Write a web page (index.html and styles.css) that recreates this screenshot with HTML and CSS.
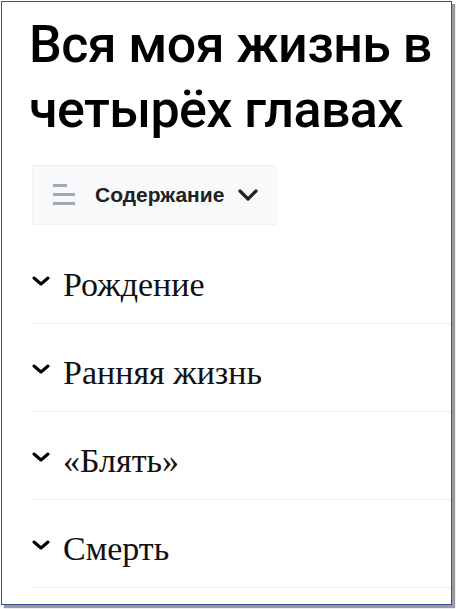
FILE: index.html
```html
<!DOCTYPE html>
<html lang="ru">
<head>
<meta charset="utf-8">
<link rel="stylesheet" href="styles.css">
</head>
<body>
<div class="frame">
  <div class="page">
    <h1 class="title">Вся моя жизнь в четырёх главах</h1>
    <button class="toc">
      <svg class="toc-icon" width="24" height="22" viewBox="0 0 24 22">
        <rect x="0" y="0" width="14" height="3" fill="#a2a9b1"/>
        <rect x="0" y="9" width="22" height="3" fill="#a2a9b1"/>
        <rect x="0" y="18" width="22" height="3" fill="#a2a9b1"/>
      </svg>
      <span class="toc-label">Содержание</span>
      <svg class="toc-chev" width="20" height="12" viewBox="0 0 20 12">
        <path d="M2 2 L10 10 L18 2" fill="none" stroke="#202122" stroke-width="3.2" stroke-linecap="round" stroke-linejoin="round"/>
      </svg>
    </button>
    <ul class="sections">
      <li class="section">
        <svg class="chev" width="18" height="10" viewBox="0 0 18 10"><path d="M2 2 L9 8 L16 2" fill="none" stroke="#000" stroke-width="3" stroke-linecap="round" stroke-linejoin="round"/></svg>
        <span class="section-title">Рождение</span>
      </li>
      <li class="section">
        <svg class="chev" width="18" height="10" viewBox="0 0 18 10"><path d="M2 2 L9 8 L16 2" fill="none" stroke="#000" stroke-width="3" stroke-linecap="round" stroke-linejoin="round"/></svg>
        <span class="section-title">Ранняя жизнь</span>
      </li>
      <li class="section">
        <svg class="chev" width="18" height="10" viewBox="0 0 18 10"><path d="M2 2 L9 8 L16 2" fill="none" stroke="#000" stroke-width="3" stroke-linecap="round" stroke-linejoin="round"/></svg>
        <span class="section-title">«Блять»</span>
      </li>
      <li class="section">
        <svg class="chev" width="18" height="10" viewBox="0 0 18 10"><path d="M2 2 L9 8 L16 2" fill="none" stroke="#000" stroke-width="3" stroke-linecap="round" stroke-linejoin="round"/></svg>
        <span class="section-title">Смерть</span>
      </li>
    </ul>
  </div>
</div>
</body>
</html>
```
FILE: styles.css
```css
html, body {
  margin: 0;
  padding: 0;
  background: #ffffff;
}
body {
  width: 456px;
  height: 609px;
  overflow: hidden;
}
.frame {
  margin: 1px 0 0 1px;
  width: 449px;
  height: 602px;
  border: 1px solid #3f4c9c;
  box-shadow: 3px 3px 1px #9a9a9a;
  overflow: hidden;
  background: #fff;
}
.page {
  padding: 10px 0 0 30px;
}
.title {
  margin: 0 0 0 -3px;
  font-family: Roboto, "Liberation Sans", sans-serif;
  font-weight: 500;
  font-size: 52px;
  line-height: 65px;
  color: #000;
  letter-spacing: -0.6px;
}
.toc {
  margin-top: 23px;
  display: flex;
  align-items: center;
  width: 245px;
  height: 60px;
  padding: 0 0 0 20px;
  background: #f8f9fa;
  border: 1px solid #f1f2f4;
  border-radius: 2px;
  font: inherit;
}
.toc-icon {
  display: block;
  flex: none;
}
.toc-label {
  margin-left: 18px;
  font-family: "Liberation Sans", Arial, sans-serif;
  font-weight: bold;
  font-size: 21px;
  color: #202122;
}
.toc-chev {
  margin-left: 14px;
  display: block;
  flex: none;
}
.sections {
  list-style: none;
  margin: 11px 0 0 0;
  padding: 0;
}
.section {
  display: flex;
  align-items: center;
  padding: 29px 0 18px 0;
  border-bottom: 1px solid #eaecf0;
}
.chev {
  display: block;
  flex: none;
  margin-top: -8px;
}
.section-title {
  margin-left: 13px;
  font-family: "Liberation Serif", "Times New Roman", serif;
  font-size: 34px;
  line-height: 40px;
  color: #111;
}
```
